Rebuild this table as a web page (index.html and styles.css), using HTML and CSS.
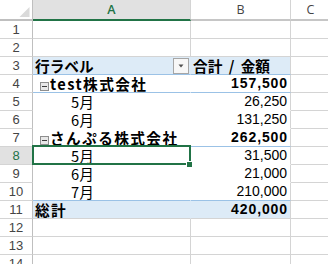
FILE: index.html
```html
<!DOCTYPE html>
<html lang="ja">
<head>
<meta charset="utf-8">
<link rel="stylesheet" href="styles.css">
</head>
<body>
<div class="sheet">
  <div class="corner"><svg width="32" height="19" viewBox="0 0 32 19"><polygon points="19.5,17 29.5,17 29.5,7" fill="#dadada"/></svg></div>
  <div class="ch ch-sel">A</div>
  <div class="ch">B</div>
  <div class="ch">C</div>

  <div class="rh">1</div><div class="c"></div><div class="c"></div><div class="c"></div>
  <div class="rh">2</div><div class="c"></div><div class="c"></div><div class="c"></div>

  <div class="rh">3</div>
  <div class="c pa ph"><span class="b">行ラベル</span><svg class="dd" width="16" height="16" viewBox="0 0 16 16"><rect x="0.5" y="0.5" width="15" height="15" fill="#f7f7f7" stroke="#a6a6a6"/><polygon points="5.5,6.5 10.5,6.5 8,9.5" fill="#505050"/></svg></div>
  <div class="c pb ph"><span class="b hdr">合計 / 金額</span></div>
  <div class="c"></div>

  <div class="rh">4</div>
  <div class="c pa pg grp-cell"><svg class="tg" width="9" height="9" viewBox="0 0 9 9"><rect x="0.5" y="0.5" width="8" height="8" fill="#e8e8e8" stroke="#8e8e8e"/><rect x="2" y="4" width="5" height="1" fill="#3c3c3c"/></svg><span class="b grp">test株式会社</span></div>
  <div class="c pb pg num nb">157,500</div>
  <div class="c"></div>

  <div class="rh">5</div><div class="c pa pr child">5月</div><div class="c pb pr num">26,250</div><div class="c"></div>
  <div class="rh">6</div><div class="c pa pr child">6月</div><div class="c pb pr num">131,250</div><div class="c"></div>

  <div class="rh">7</div>
  <div class="c pa pg grp-cell"><svg class="tg" width="9" height="9" viewBox="0 0 9 9"><rect x="0.5" y="0.5" width="8" height="8" fill="#e8e8e8" stroke="#8e8e8e"/><rect x="2" y="4" width="5" height="1" fill="#3c3c3c"/></svg><span class="b grp">さんぷる株式会社</span></div>
  <div class="c pb pg num nb">262,500</div>
  <div class="c"></div>

  <div class="rh rh-sel">8</div><div class="c pa pr child active">5月<span class="fh"></span></div><div class="c pb pr num">31,500</div><div class="c"></div>
  <div class="rh">9</div><div class="c pa pr child">6月</div><div class="c pb pr num">21,000</div><div class="c"></div>
  <div class="rh">10</div><div class="c pa pg child">7月</div><div class="c pb pg num">210,000</div><div class="c"></div>

  <div class="rh">11</div>
  <div class="c pa pt"><span class="b grp">総計</span></div>
  <div class="c pb pt num nb">420,000</div>
  <div class="c"></div>

  <div class="rh">12</div><div class="c"></div><div class="c"></div><div class="c"></div>
  <div class="rh">13</div><div class="c"></div><div class="c"></div><div class="c"></div>
  <div class="rh">14</div><div class="c"></div><div class="c"></div><div class="c"></div>
</div>
</body>
</html>
```

FILE: styles.css
```css
html, body {
  margin: 0;
  padding: 0;
  background: #ffffff;
}

.sheet {
  display: grid;
  grid-template-columns: 33px 158px 100px 40px;
  grid-template-rows: 21px repeat(14, 18px);
  width: 328px;
  height: 264px;
  overflow: hidden;
  font-family: "Noto Sans CJK JP", sans-serif;
  font-size: 14.67px;
  color: #000;
}

.sheet > div {
  box-sizing: border-box;
  border-right: 1px solid #d4d4d4;
  border-bottom: 1px solid #d4d4d4;
  line-height: 17px;
  white-space: nowrap;
  min-width: 0;
}

/* headers */
.corner {
  border-right-color: #bfbfbf !important;
  border-bottom: 2px solid #bfbfbf !important;
}
.corner svg { display: block; }

.ch {
  font-family: "Open Sans", "Liberation Sans", sans-serif;
  font-size: 12.5px;
  color: #444;
  text-align: center;
  line-height: 20px !important;
  border-bottom: 2px solid #c6c6c6 !important;
}
.ch-sel {
  background: #e1e1e1;
  color: #217346;
  font-weight: 600;
  border-bottom-color: #217346 !important;
}

.rh {
  font-family: "Liberation Sans", sans-serif;
  font-size: 13px;
  color: #444;
  text-align: center;
  border-right-color: #bfbfbf !important;
}
.rh-sel {
  background: #e1e1e1;
  color: #217346;
}

/* pivot table */
.pa { border-right-color: #ffffff !important; padding-left: 2px; }
.pb { padding-left: 2px; padding-right: 3px; }
.pr { border-bottom-color: #ffffff !important; }
.pg { border-bottom-color: #9bc2e6 !important; }
.ph {
  background: #ddebf7;
  border-bottom-color: #9bc2e6 !important;
}
.pa.ph { border-right-color: #ddebf7 !important; }
.pt { background: #ddebf7; }
.pa.pt { border-right-color: #ddebf7 !important; }

.b { font-weight: 700; }
.grp { letter-spacing: 1.4px; }
.hdr { word-spacing: 3px; }

.pa.ph {
  display: flex;
  justify-content: space-between;
}
.dd {
  align-self: flex-start;
  margin-top: 1px;
  margin-right: 1px;
}

.grp-cell { padding-left: 7px; }
.tg {
  display: inline-block;
  vertical-align: -1px;
  margin-right: 1px;
}

.child { padding-left: 38px; }

.num {
  font-family: "Liberation Sans", sans-serif;
  font-size: 14px;
  text-align: right;
}
.nb {
  font-weight: 700;
  letter-spacing: 0.9px;
  padding-right: 2px;
}

/* active cell */
.active { position: relative; }
.active::after {
  content: "";
  position: absolute;
  left: -1px;
  top: -2px;
  width: 159px;
  height: 20px;
  box-sizing: border-box;
  border: 2px solid #217346;
}
.fh {
  position: absolute;
  left: 153px;
  top: 14px;
  width: 5px;
  height: 5px;
  background: #217346;
  border: 1px solid #ffffff;
  z-index: 1;
}
```
